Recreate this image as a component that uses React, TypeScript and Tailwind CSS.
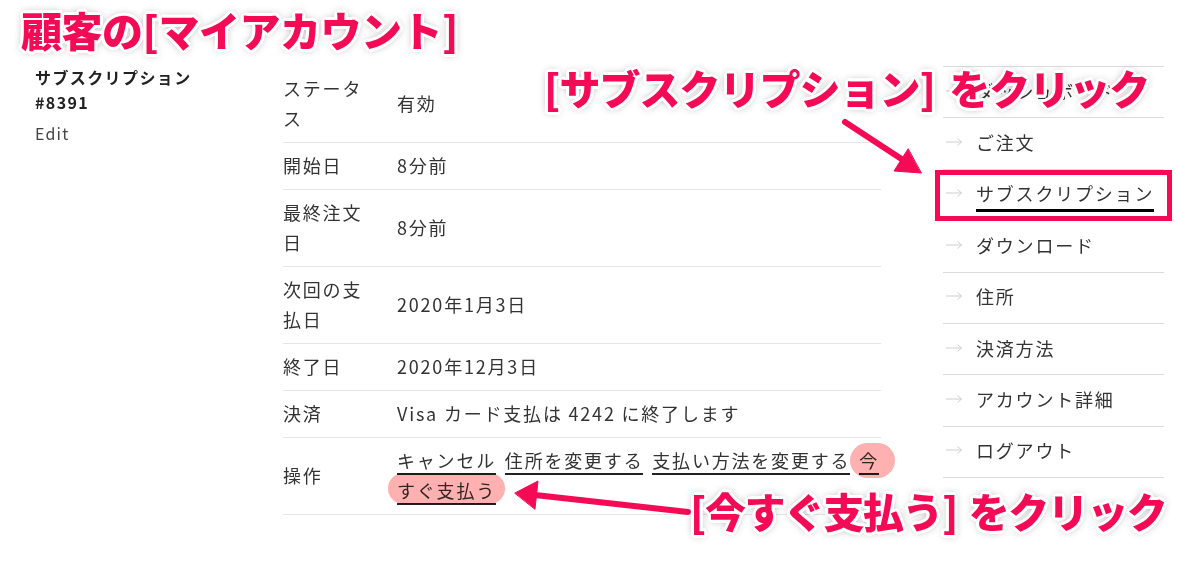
import React from "react";

const rows: { label: string; value: React.ReactNode }[] = [
  { label: "ステータス", value: "有効" },
  { label: "開始日", value: "8分前" },
  { label: "最終注文日", value: "8分前" },
  { label: "次回の支払日", value: "2020年1月3日" },
  { label: "終了日", value: "2020年12月3日" },
  { label: "決済", value: "Visa カード支払は 4242 に終了します" },
];

const navItems = [
  "ダッシュボード",
  "ご注文",
  "サブスクリプション",
  "ダウンロード",
  "住所",
  "決済方法",
  "アカウント詳細",
  "ログアウト",
];

function NavArrow() {
  return (
    <svg width="18" height="10" viewBox="0 0 18 10" className="shrink-0">
      <path d="M1 5H16.5M12.5 1.5L16.5 5L12.5 8.5" fill="none" stroke="#cfcfcf" strokeWidth="1" />
    </svg>
  );
}

const Link = ({ children }: { children: React.ReactNode }) => (
  <span className="border-b-2 border-[#222]">{children}</span>
);

const annot =
  "absolute whitespace-nowrap font-black text-[#f50a55] leading-[44px] [text-shadow:3px_0_0_#fff,-3px_0_0_#fff,0_3px_0_#fff,0_-3px_0_#fff,2px_2px_0_#fff,-2px_-2px_0_#fff,2px_-2px_0_#fff,-2px_2px_0_#fff,3px_1px_0_#fff,-3px_1px_0_#fff,1px_3px_0_#fff,1px_-3px_0_#fff,0_0_9px_rgba(0,0,0,0.45)]";

export default function App() {
  return (
    <div className="relative w-[1177px] h-[561px] overflow-hidden bg-white font-['Noto_Sans_CJK_JP',sans-serif] text-[#333]">
      <div className="flex pt-[65px] pl-[35px]">
        {/* left column */}
        <div className="w-[248px] shrink-0">
          <div className="w-[200px] text-[16px] font-bold leading-[25px] tracking-[1.4px] text-[#222]">
            サブスクリプション #8391
          </div>
          <div className="mt-[6px] text-[16px] leading-[25px] tracking-[1.2px] text-[#444]">Edit</div>
        </div>

        {/* table */}
        <div className="w-[598px] shrink-0 pt-[1px] text-[18px] leading-[30px] tracking-[1.8px]">
          {rows.map((r) => (
            <div key={r.label} className="grid grid-cols-[114px_1fr] items-center border-b border-[#e6e6e6] pt-[7px] pb-[9px]">
              <div className="w-[90px]">{r.label}</div>
              <div>{r.value}</div>
            </div>
          ))}
          <div className="grid grid-cols-[114px_1fr] items-center border-b border-[#e6e6e6] pt-[7px] pb-[9px]">
            <div className="w-[90px]">操作</div>
            <div className="[word-spacing:3px]">
              <Link>キャンセル</Link> <Link>住所を変更する</Link> <Link>支払い方法を変更する</Link>{" "}
              <Link>今すぐ支払う</Link>
            </div>
          </div>
        </div>

        {/* nav */}
        <nav className="ml-[62px] mt-[1px] w-[221px] shrink-0 border-t border-[#dcdcdc] text-[18px] leading-[30px] tracking-[1.8px]">
          {navItems.map((item) => (
            <div key={item} className="flex h-[51.4px] items-center border-b border-[#dcdcdc] pl-[2px] pb-[3px]">
              <NavArrow />
              <span className="ml-[13px]">
                {item === "サブスクリプション" ? (
                  <span className="border-b-[3px] border-black pb-[3px]">{item}</span>
                ) : (
                  item
                )}
              </span>
            </div>
          ))}
        </nav>
      </div>

      {/* highlight blobs */}
      <div className="pointer-events-none absolute left-[850px] top-[443px] h-[35px] w-[45px] rounded-full bg-[#ffb0b0] mix-blend-multiply" />
      <div className="pointer-events-none absolute left-[388px] top-[473px] h-[31px] w-[117px] rounded-full bg-[#ffb0b0] mix-blend-multiply" />

      {/* active box */}
      <div className="pointer-events-none absolute left-[935px] top-[170px] h-[51px] w-[237px] border-[5px] border-[#f50a55]" />

      {/* arrows */}
      <svg className="pointer-events-none absolute left-0 top-0" width="1177" height="561" viewBox="0 0 1177 561">
        <g fill="#f50a55" stroke="#f50a55" strokeLinecap="round">
          <line x1="845" y1="122" x2="903" y2="160" strokeWidth="6" />
          <polygon points="921,173 894,171 908,149" strokeWidth="1" />
          <line x1="535" y1="495" x2="688" y2="512" strokeWidth="6" />
          <polygon points="515,493 538,481 535,509" strokeWidth="1" />
        </g>
      </svg>

      {/* annotation texts */}
      <div className={`${annot} left-[21px] top-[7px] text-[41px] tracking-[-0.5px]`}>顧客の[マイアカウント]</div>
      <div className={`${annot} left-[544px] top-[65px] text-[41px] tracking-[-1px] [word-spacing:6px]`}>[サブスクリプション] をクリック</div>
      <div className={`${annot} left-[690px] top-[488px] text-[41px] tracking-[-1.5px] [word-spacing:4px]`}>[今すぐ支払う] をクリック</div>
    </div>
  );
}
